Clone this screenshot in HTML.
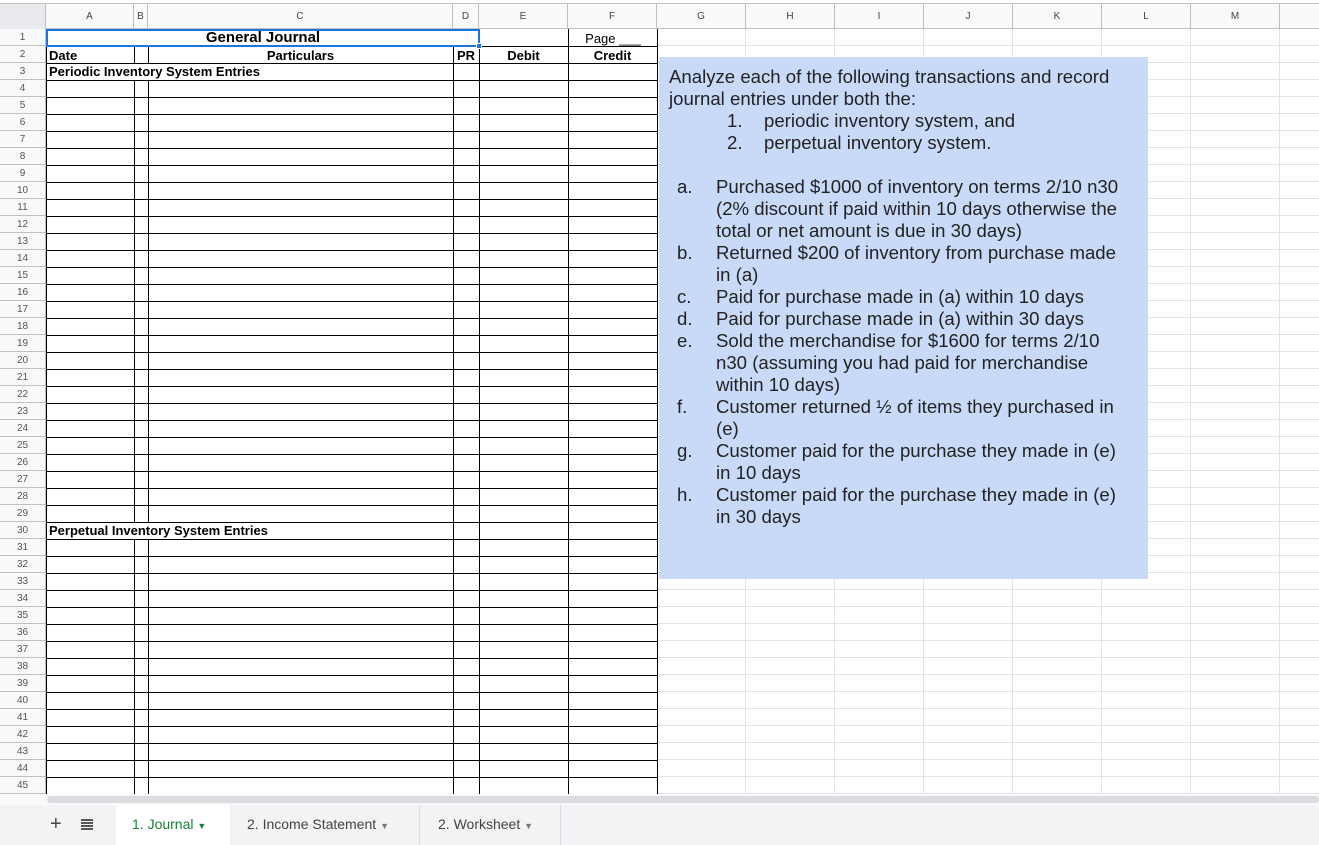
<!DOCTYPE html>
<html><head><meta charset="utf-8"><style>
*{margin:0;padding:0;box-sizing:border-box}
body{width:1319px;height:845px;overflow:hidden;background:#fff;font-family:"Liberation Sans",Arial,sans-serif;position:relative}
.abs{position:absolute}
#sheet{position:absolute;left:46px;top:29px;width:1273px;height:765px;
background-image:repeating-linear-gradient(to bottom,transparent 0 16px,#e2e3e3 16px 17px),
repeating-linear-gradient(to right,transparent 0 88px,#e2e3e3 88px 89px);background-position:0 0,611px 0}
#colhdr{position:absolute;left:0;top:3px;width:1319px;height:26px;background:#f8f9fa;border-bottom:1px solid #c0c0c0;border-top:1px solid #c0c0c0}
#colhdr div{position:absolute;top:0;height:25px;line-height:25px;text-align:center;font-size:10px;color:#444;border-right:1px solid #c0c0c0}
#rowhdr{position:absolute;left:0;top:29px;width:46px;height:765px;background:#f8f9fa;border-right:1px solid #c0c0c0}
#rowhdr div{height:17px;line-height:17px;font-size:10px;color:#555;text-align:center;border-bottom:1px solid #c0c0c0}
#jr{position:absolute;left:46px;top:46px;width:612px;height:749px;background-color:#fff;
background-image:repeating-linear-gradient(to bottom,#000 0 1px,transparent 1px 17px)}
.v{position:absolute;width:1px;background:#000}
.t{font-size:13px;color:#000}
#box{position:absolute;left:659px;top:57px;width:489px;height:522px;background:#c9daf8;font-size:18.6px;line-height:22px;color:#222;padding:9px 0 0 10px}
#box p{white-space:nowrap}
.n{display:inline-block}
#tabs{position:absolute;left:0;top:805px;width:1319px;height:40px;background:#f1f3f4;font-size:14px;color:#444}
</style></head><body>
<div id="sheet"></div>
<div id="colhdr">
<div style="left:0;width:46px;background:#e8eaed"></div>
<div style="left:46px;width:88px">A</div>
<div style="left:134px;width:14px">B</div>
<div style="left:148px;width:305px">C</div>
<div style="left:453px;width:26px">D</div>
<div style="left:479px;width:89px">E</div>
<div style="left:568px;width:89px">F</div>
<div style="left:657px;width:89px">G</div>
<div style="left:746px;width:89px">H</div>
<div style="left:835px;width:89px">I</div>
<div style="left:924px;width:89px">J</div>
<div style="left:1013px;width:89px">K</div>
<div style="left:1102px;width:89px">L</div>
<div style="left:1191px;width:89px">M</div>
</div>
<div id="rowhdr">
<div>1</div><div>2</div><div>3</div><div>4</div><div>5</div><div>6</div><div>7</div><div>8</div><div>9</div><div>10</div>
<div>11</div><div>12</div><div>13</div><div>14</div><div>15</div><div>16</div><div>17</div><div>18</div><div>19</div><div>20</div>
<div>21</div><div>22</div><div>23</div><div>24</div><div>25</div><div>26</div><div>27</div><div>28</div><div>29</div><div>30</div>
<div>31</div><div>32</div><div>33</div><div>34</div><div>35</div><div>36</div><div>37</div><div>38</div><div>39</div><div>40</div>
<div>41</div><div>42</div><div>43</div><div>44</div><div>45</div>
</div>
<div class="abs" style="left:46px;top:29px;width:611px;height:17px;background:#fff"></div>
<div id="jr"></div>
<div class="v" style="left:46px;top:46px;height:748px"></div>
<div class="v" style="left:134px;top:46px;height:748px"></div>
<div class="v" style="left:148px;top:46px;height:748px"></div>
<div class="v" style="left:453px;top:46px;height:748px"></div>
<div class="v" style="left:479px;top:46px;height:748px"></div>
<div class="v" style="left:568px;top:29px;height:765px"></div>
<div class="v" style="left:657px;top:29px;height:765px"></div>
<div class="abs t" style="left:47px;top:64px;width:406px;height:16px;background:#fff;font-weight:bold;line-height:16px;padding-left:2px">Periodic Inventory System Entries</div>
<div class="abs t" style="left:47px;top:523px;width:406px;height:16px;background:#fff;font-weight:bold;line-height:16px;padding-left:2px">Perpetual Inventory System Entries</div>
<div class="abs" style="left:46px;top:29px;width:434px;height:18px;border:2px solid #1a73e8;background:#fff;text-align:center;font-weight:bold;font-size:15px;line-height:14px">General Journal</div>
<div class="abs" style="left:476px;top:43px;width:6px;height:6px;background:#1a73e8;border:1px solid #fff"></div>
<div class="abs t" style="left:569px;top:30px;width:88px;text-align:center;line-height:17px">Page ___</div>
<div class="abs t" style="left:49px;top:47px;line-height:17px;font-weight:bold">Date</div>
<div class="abs t" style="left:148px;top:47px;width:305px;text-align:center;line-height:17px;font-weight:bold">Particulars</div>
<div class="abs t" style="left:453px;top:47px;width:26px;text-align:center;line-height:17px;font-weight:bold">PR</div>
<div class="abs t" style="left:479px;top:47px;width:89px;text-align:center;line-height:17px;font-weight:bold">Debit</div>
<div class="abs t" style="left:568px;top:47px;width:89px;text-align:center;line-height:17px;font-weight:bold">Credit</div>

<div id="box">
<p>Analyze each of the following transactions and record</p>
<p>journal entries under both the:</p>
<p style="padding-left:58px"><span class="n" style="width:37px">1.</span>periodic inventory system, and</p>
<p style="padding-left:58px"><span class="n" style="width:37px">2.</span>perpetual inventory system.</p>
<p>&nbsp;</p>
<p style="padding-left:8px"><span class="n" style="width:39px">a.</span>Purchased $1000 of inventory on terms 2/10 n30</p>
<p style="padding-left:47px">(2% discount if paid within 10 days otherwise the</p>
<p style="padding-left:47px">total or net amount is due in 30 days)</p>
<p style="padding-left:8px"><span class="n" style="width:39px">b.</span>Returned $200 of inventory from purchase made</p>
<p style="padding-left:47px">in (a)</p>
<p style="padding-left:8px"><span class="n" style="width:39px">c.</span>Paid for purchase made in (a) within 10 days</p>
<p style="padding-left:8px"><span class="n" style="width:39px">d.</span>Paid for purchase made in (a) within 30 days</p>
<p style="padding-left:8px"><span class="n" style="width:39px">e.</span>Sold the merchandise for $1600 for terms 2/10</p>
<p style="padding-left:47px">n30 (assuming you had paid for merchandise</p>
<p style="padding-left:47px">within 10 days)</p>
<p style="padding-left:8px"><span class="n" style="width:39px">f.</span>Customer returned ½ of items they purchased in</p>
<p style="padding-left:47px">(e)</p>
<p style="padding-left:8px"><span class="n" style="width:39px">g.</span>Customer paid for the purchase they made in (e)</p>
<p style="padding-left:47px">in 10 days</p>
<p style="padding-left:8px"><span class="n" style="width:39px">h.</span>Customer paid for the purchase they made in (e)</p>
<p style="padding-left:47px">in 30 days</p>
</div>

<div class="abs" style="left:0;top:794px;width:1319px;height:11px;background:#f8f9fa"></div>
<div class="abs" style="left:47px;top:796px;width:1272px;height:7px;background:#dadce0;border-radius:4px"></div>
<div id="tabs">
<div class="abs" style="left:50px;top:8px;font-size:20px;line-height:22px;color:#444">+</div>
<div class="abs" style="left:81px;top:14px;width:12px;height:11px;background:repeating-linear-gradient(#555 0 2px,transparent 2px 3px)"></div>
<div class="abs" style="left:116px;top:0;width:114px;height:40px;background:#fff;color:#188038;line-height:38px;padding-left:16px">1. Journal <span style="font-size:9px">▼</span></div>
<div class="abs" style="left:231px;top:0;width:189px;height:40px;line-height:38px;padding-left:16px;border-right:1px solid #dadce0">2. Income Statement <span style="font-size:9px;color:#777">▼</span></div>
<div class="abs" style="left:421px;top:0;width:140px;height:40px;line-height:38px;padding-left:17px;border-right:1px solid #dadce0">2. Worksheet <span style="font-size:9px;color:#777">▼</span></div>
</div>
</body></html>
